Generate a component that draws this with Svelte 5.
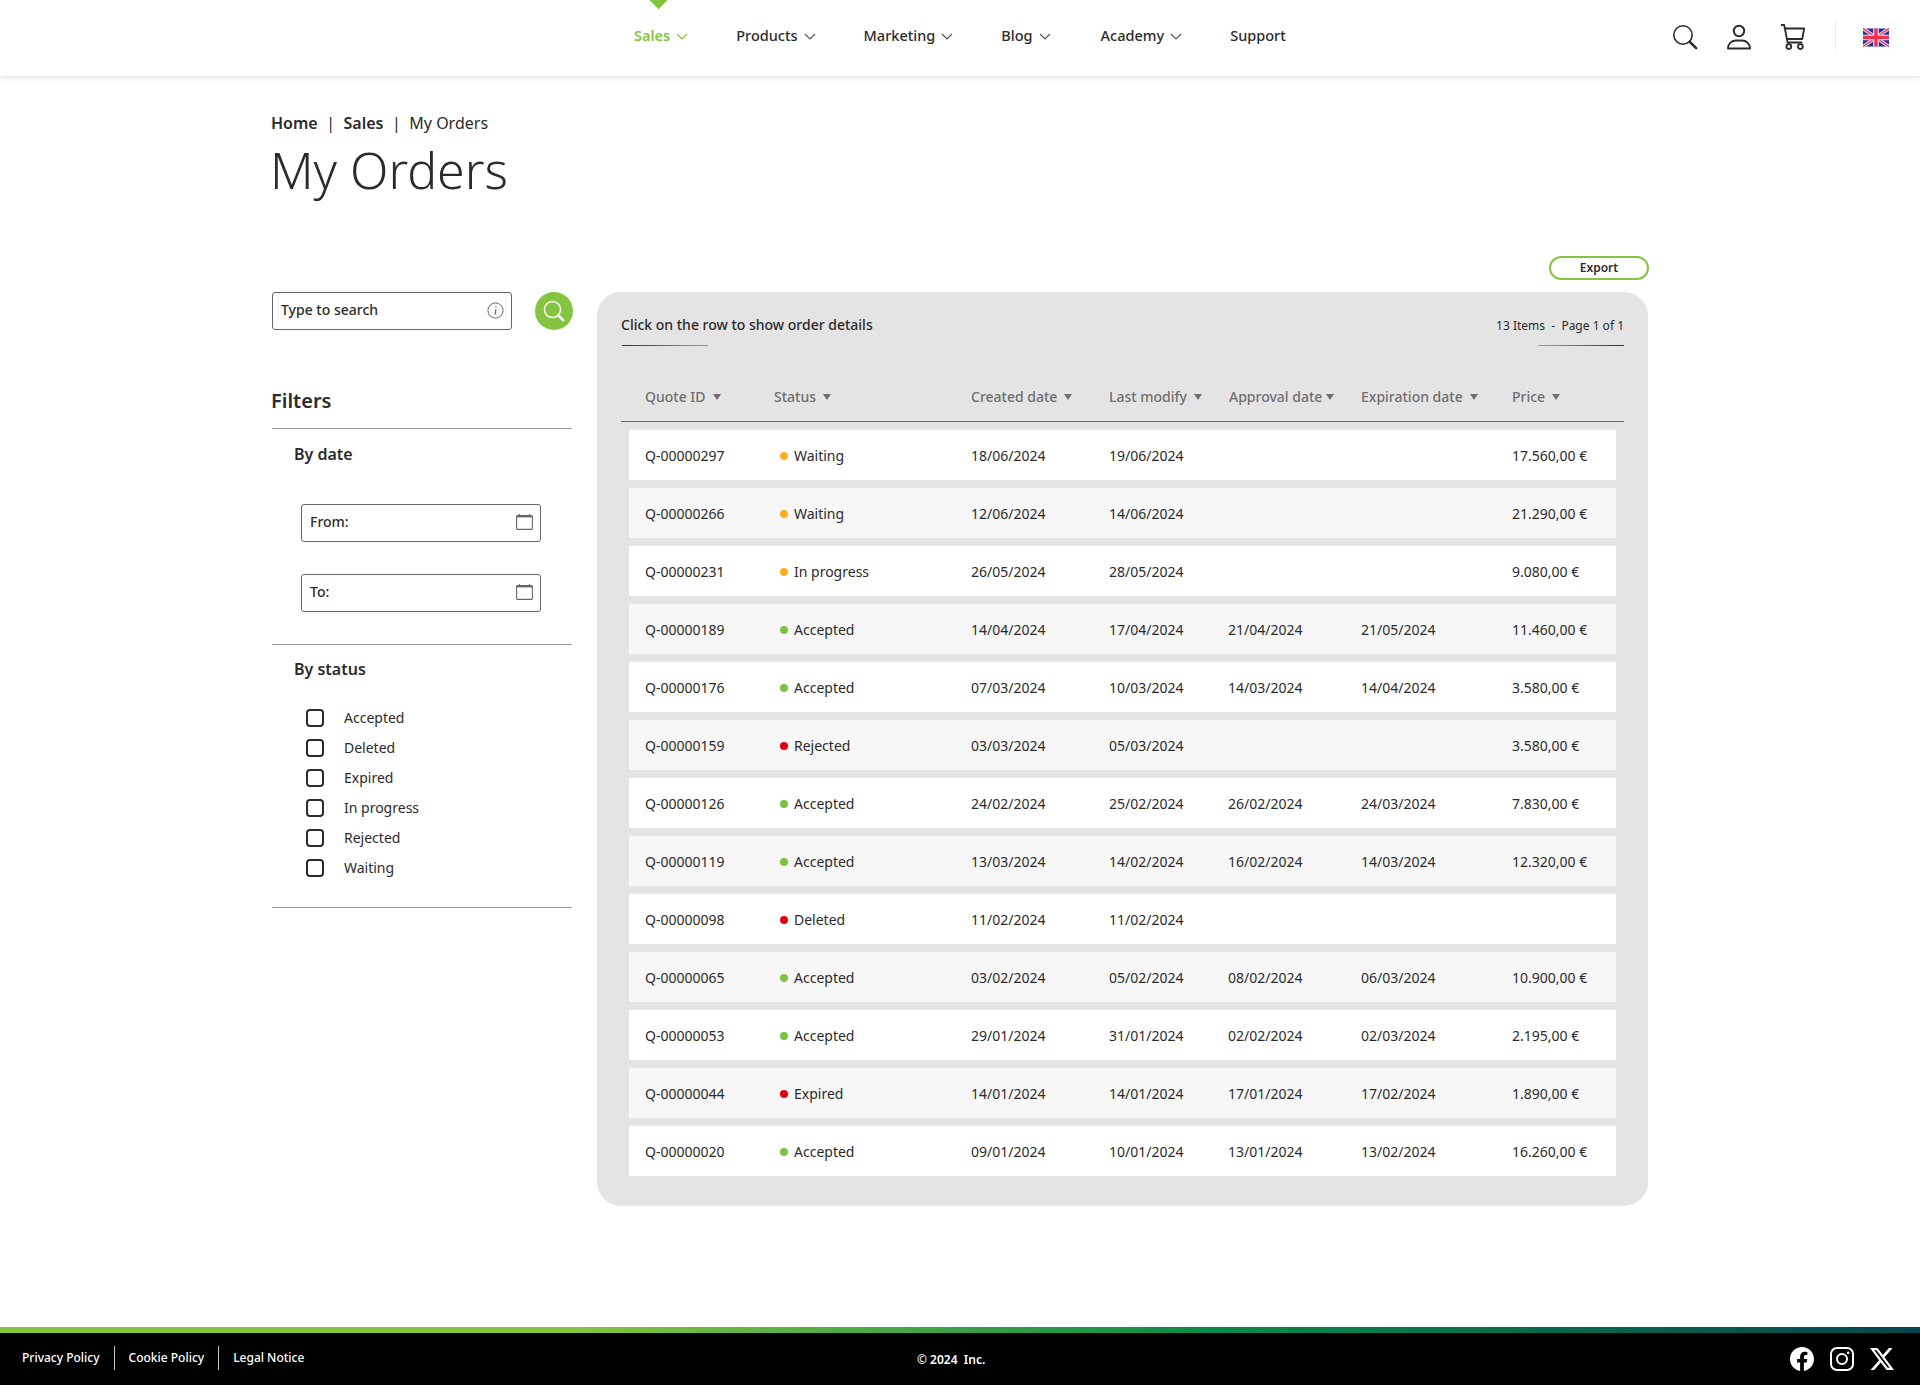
<script>
	const nav = [
		{ label: "Sales", active: true, caret: true },
		{ label: "Products", caret: true },
		{ label: "Marketing", caret: true },
		{ label: "Blog", caret: true },
		{ label: "Academy", caret: true },
		{ label: "Support" }
	]

	const columns = ["Quote ID", "Status", "Created date", "Last modify", "Approval date", "Expiration date", "Price"]

	const orders = [
		["Q-00000297", "Waiting", "18/06/2024", "19/06/2024", "", "", "17.560,00 €"],
		["Q-00000266", "Waiting", "12/06/2024", "14/06/2024", "", "", "21.290,00 €"],
		["Q-00000231", "In progress", "26/05/2024", "28/05/2024", "", "", "9.080,00 €"],
		["Q-00000189", "Accepted", "14/04/2024", "17/04/2024", "21/04/2024", "21/05/2024", "11.460,00 €"],
		["Q-00000176", "Accepted", "07/03/2024", "10/03/2024", "14/03/2024", "14/04/2024", "3.580,00 €"],
		["Q-00000159", "Rejected", "03/03/2024", "05/03/2024", "", "", "3.580,00 €"],
		["Q-00000126", "Accepted", "24/02/2024", "25/02/2024", "26/02/2024", "24/03/2024", "7.830,00 €"],
		["Q-00000119", "Accepted", "13/03/2024", "14/02/2024", "16/02/2024", "14/03/2024", "12.320,00 €"],
		["Q-00000098", "Deleted", "11/02/2024", "11/02/2024", "", "", ""],
		["Q-00000065", "Accepted", "03/02/2024", "05/02/2024", "08/02/2024", "06/03/2024", "10.900,00 €"],
		["Q-00000053", "Accepted", "29/01/2024", "31/01/2024", "02/02/2024", "02/03/2024", "2.195,00 €"],
		["Q-00000044", "Expired", "14/01/2024", "14/01/2024", "17/01/2024", "17/02/2024", "1.890,00 €"],
		["Q-00000020", "Accepted", "09/01/2024", "10/01/2024", "13/01/2024", "13/02/2024", "16.260,00 €"]
	]

	const statuses = ["Accepted", "Deleted", "Expired", "In progress", "Rejected", "Waiting"]

	const dotClass = {
		Waiting: "dot--amber",
		"In progress": "dot--amber",
		Accepted: "dot--green",
		Rejected: "dot--red",
		Deleted: "dot--red",
		Expired: "dot--red"
	}
</script>

{#snippet calendar()}
	<svg class="calendar" width="17" height="16" viewBox="0 0 17 16" fill="none">
		<rect x="0.6" y="1.6" width="15.8" height="13.8" rx="1" stroke="#66696b" stroke-width="1.1" />
		<rect x="0.6" y="1.4" width="15.8" height="2" fill="#66696b" />
		<path d="M3.5 0v2M13.5 0v2" stroke="#66696b" />
	</svg>
{/snippet}

<div class="page">
	<header class="topbar">
		<span class="marker"></span>
		<nav class="menu">
			{#each nav as item}
				<a href="#0" class="menu__item" class:menu__item--active={item.active}>
					{item.label}
					{#if item.caret}
						<svg width="12" height="7" viewBox="0 0 12 7" fill="none"><path d="M1 1l5 5 5-5" stroke="currentColor" stroke-width="1.2" /></svg>
					{/if}
				</a>
			{/each}
		</nav>
		<div class="tools">
			<svg width="26" height="26" viewBox="0 0 26 26" fill="none" stroke="#2b2b2b">
				<circle cx="11" cy="11" r="9.2" stroke-width="1.6" />
				<path d="M17.8 17.8l6.4 6.4" stroke-width="2.6" stroke-linecap="round" />
			</svg>
			<svg width="26" height="26" viewBox="0 0 26 26" fill="none" stroke="#2b2b2b" stroke-width="2">
				<circle cx="13" cy="7" r="5.2" />
				<path d="M2 24.5c0-5 4-8 8-8h6c4 0 8 3 8 8z" stroke-linejoin="round" />
			</svg>
			<svg width="26" height="26" viewBox="0 0 26 26" fill="none" stroke="#2b2b2b" stroke-width="1.8">
				<path d="M1 1h3.2l3.4 17.5h14.6" stroke-linejoin="round" />
				<path d="M4.8 4.5h19.4l-2 10.5H7" stroke-linejoin="round" />
				<circle cx="8.8" cy="22.6" r="2.4" />
				<circle cx="20.4" cy="22.6" r="2.4" />
			</svg>
			<span class="tools__sep"></span>
			<svg class="flag" width="26" height="19" viewBox="0 0 60 42">
				<rect width="60" height="42" rx="3" fill="#1a2aa8" />
				<path d="M0 0l60 42M60 0L0 42" stroke="#ecdfe6" stroke-width="8" />
				<path d="M0 0l60 42M60 0L0 42" stroke="#f0304f" stroke-width="3" />
				<path d="M30 0v42M0 21h60" stroke="#f3e6ec" stroke-width="13" />
				<path d="M30 0v42M0 21h60" stroke="#f0304f" stroke-width="8" />
			</svg>
		</div>
	</header>

	<main class="content">
		<div class="crumbs">
			<a href="#0">Home</a>
			<span class="crumbs__sep">|</span>
			<a href="#0">Sales</a>
			<span class="crumbs__sep">|</span>
			<span class="crumbs__current">My Orders</span>
		</div>
		<h1 class="title">My Orders</h1>

		<div class="actions">
			<button class="export">Export</button>
		</div>

		<div class="columns">
			<aside class="sidebar">
				<div class="search">
					<div class="field field--search">
						<span>Type to search</span>
						<svg width="17" height="17" viewBox="0 0 17 17" fill="none">
							<circle cx="8.5" cy="8.5" r="7.6" stroke="#666" />
							<path d="M9 4.2v1.4M8.8 7.4l-.5 5.2" stroke="#666" stroke-width="1.2" />
						</svg>
					</div>
					<button class="search__go" aria-label="Search">
						<svg width="22" height="22" viewBox="0 0 22 22" fill="none" stroke="#fff">
							<circle cx="9.5" cy="9.5" r="8" stroke-width="1.5" />
							<path d="M15.4 15.4l5 5" stroke-width="2.2" stroke-linecap="round" />
						</svg>
					</button>
				</div>

				<h2 class="filters">Filters</h2>

				<section class="group group--date">
					<h3>By date</h3>
					<div class="field field--date"><span>From:</span>{@render calendar()}</div>
					<div class="field field--date"><span>To:</span>{@render calendar()}</div>
				</section>

				<section class="group group--status">
					<h3>By status</h3>
					<ul class="checks">
						{#each statuses as status}
							<li><span class="box"></span>{status}</li>
						{/each}
					</ul>
				</section>
			</aside>

			<section class="panel">
				<div class="panel__top">
					<p class="hint">Click on the row to show order details</p>
					<p class="count">13 Items &nbsp;-&nbsp; Page 1 of 1</p>
				</div>

				<div class="thead">
					{#each columns as col}
						<span class="thead__cell">{col}<i class="sort"></i></span>
					{/each}
				</div>

				<div class="rows">
					{#each orders as row}
						<div class="row">
							{#each row as value, i}
								{#if i === 1}
									<span class="status"><i class="dot {dotClass[value]}"></i>{value}</span>
								{:else}
									<span>{value}</span>
								{/if}
							{/each}
						</div>
					{/each}
				</div>
			</section>
		</div>
	</main>

	<footer class="footer">
		<div class="footer__links">
			<a href="#0">Privacy Policy</a>
			<a href="#0">Cookie Policy</a>
			<a href="#0">Legal Notice</a>
		</div>
		<div class="footer__copy">© 2024 &nbsp;Inc.</div>
		<div class="footer__social">
			<svg width="24" height="24" viewBox="0 0 24 24" fill="#fff"><path d="M24 12.07C24 5.4 18.63 0 12 0S0 5.4 0 12.07c0 6.03 4.39 11.02 10.13 11.93v-8.44H7.08v-3.49h3.05V9.41c0-3.02 1.79-4.69 4.53-4.69 1.31 0 2.68.24 2.68.24v2.97h-1.51c-1.49 0-1.96.93-1.96 1.89v2.25h3.33l-.53 3.49h-2.8V24C19.61 23.09 24 18.1 24 12.07z" /></svg>
			<svg width="24" height="24" viewBox="0 0 24 24" fill="none" stroke="#fff">
				<rect x="1" y="1" width="22" height="22" rx="6" stroke-width="2" />
				<circle cx="12" cy="12" r="5" stroke-width="2" />
				<circle cx="18.2" cy="5.8" r="1.3" fill="#fff" stroke="none" />
			</svg>
			<svg width="24" height="24" viewBox="0 0 24 24" fill="#fff"><path d="M18.9 1h3.68l-8.04 9.19L24 23h-7.41l-5.8-7.58L4.16 23H.47l8.6-9.83L0 1h7.59l5.24 6.93zM17.61 20.65h2.04L6.49 3.24H4.3z" /></svg>
		</div>
	</footer>
</div>

<style>
	:global(body) {
		margin: 0;
		background: #fff;
		color: #2b2b2b;
		font-family: "Noto Sans", "Open Sans", sans-serif;
	}

	a {
		color: inherit;
		text-decoration: none;
	}

	h1,
	h2,
	h3,
	p,
	ul {
		margin: 0;
		padding: 0;
	}

	.page {
		display: flex;
		flex-direction: column;
		min-height: 1385px;
	}

	/* Top bar */

	.topbar {
		position: relative;
		display: flex;
		align-items: center;
		height: 76px;
		padding-left: 634px;
		padding-right: 31px;
		box-sizing: border-box;
		box-shadow: 0 1px 6px rgba(0, 0, 0, 0.14);
	}

	.marker {
		position: absolute;
		left: 649px;
		top: -10px;
		width: 19px;
		height: 19px;
		background: #84c441;
		transform: rotate(45deg) scale(0.72);
	}

	.menu {
		display: flex;
		gap: 48px;
		margin-top: -6px;
	}

	.menu__item {
		display: flex;
		align-items: center;
		gap: 6px;
		font-size: 14.5px;
		font-weight: 500;
		line-height: 20px;
	}

	.menu__item:nth-child(5) {
		margin-left: 2px;
	}

	.menu__item svg {
		color: #555;
		margin-top: 3px;
	}

	.menu__item--active {
		font-weight: 600;
	}

	.menu__item--active,
	.menu__item--active svg {
		color: #84c441;
	}

	.tools {
		display: flex;
		align-items: center;
		gap: 28px;
		margin-left: auto;
		margin-top: -2px;
	}

	.tools__sep {
		width: 1px;
		height: 34px;
		background: #eee;
		margin-left: 1px;
		margin-right: -1px;
	}

	.tools svg {
		flex: none;
	}

	/* Page */

	.content {
		width: 1376px;
		margin-left: 272px;
		padding-top: 36px;
	}

	.crumbs {
		display: flex;
		gap: 8.5px;
		margin-left: -1px;
		font-size: 16px;
		line-height: 22px;
		font-weight: 600;
	}

	.crumbs__sep,
	.crumbs__current {
		font-weight: 400;
	}

	.title {
		margin-top: 1px;
		margin-left: -2px;
		font-size: 50px;
		line-height: 70px;
		font-weight: 300;
		color: #2b2b2b;
	}

	.actions {
		display: flex;
		justify-content: flex-end;
		margin-top: 51px;
		margin-right: -1px;
	}

	.export {
		width: 100px;
		height: 24px;
		padding: 0 0 2px;
		border: 2px solid #84c441;
		border-radius: 12px;
		background: #fff;
		color: #2b2b2b;
		font: 600 12px "Noto Sans", sans-serif;
	}

	.columns {
		display: flex;
		gap: 25px;
		margin-top: 12px;
		align-items: flex-start;
	}

	/* Sidebar */

	.sidebar {
		width: 300px;
		flex: none;
	}

	.search {
		display: flex;
		align-items: center;
		gap: 23px;
	}

	.field {
		display: flex;
		flex: none;
		align-items: center;
		justify-content: space-between;
		box-sizing: border-box;
		width: 240px;
		height: 38px;
		padding: 0 8px;
		border: 1px solid #666;
		border-radius: 3px;
		font-size: 14px;
		font-weight: 500;
	}

	.field--search {
		padding-right: 7px;
		padding-bottom: 2px;
	}

	.field--search span {
		margin-top: -2px;
	}

	.field--search svg {
		margin-top: 1px;
	}

	.field--date {
		margin-left: 29px;
		padding-bottom: 3px;
		padding-right: 7px;
		font-weight: 500;
	}

	.field--date svg {
		margin-top: 1px;
	}

	.search__go {
		display: grid;
		flex: none;
		place-items: center;
		width: 38px;
		height: 38px;
		padding: 0;
		border: 0;
		border-radius: 50%;
		background: #84c441;
	}

	.filters {
		margin-top: 57px;
		padding-bottom: 14px;
		text-indent: -1px;
		border-bottom: 1px solid #999;
		font-size: 20px;
		line-height: 27px;
		font-weight: 600;
	}

	.group h3 {
		margin-left: 22px;
		font-size: 16px;
		line-height: 22px;
		font-weight: 600;
	}

	.group--date {
		padding-top: 14px;
		padding-bottom: 32px;
		border-bottom: 1px solid #999;
	}

	.group--date .field {
		margin-top: 32px;
	}

	.group--date h3 + .field {
		margin-top: 39px;
	}

	.group--status {
		padding-top: 13px;
		padding-bottom: 30px;
		border-bottom: 1px solid #999;
	}

	.checks {
		list-style: none;
		margin-top: 27px;
		margin-left: 34px;
		display: flex;
		flex-direction: column;
		gap: 10px;
		font-size: 14px;
	}

	.checks li {
		display: flex;
		align-items: center;
		gap: 20px;
		height: 20px;
	}

	.box {
		box-sizing: border-box;
		width: 18px;
		height: 18px;
		margin-top: 2px;
		border: 2px solid #2b2b2b;
		border-radius: 4px;
	}

	/* Orders panel */

	.panel {
		box-sizing: border-box;
		width: 1051px;
		height: 914px;
		padding: 23px 24px 0;
		border-radius: 24px;
		background: #e4e4e4;
	}

	.panel__top {
		display: flex;
		justify-content: space-between;
		align-items: flex-start;
	}

	.hint,
	.count {
		position: relative;
		height: 21px;
		padding-bottom: 10px;
		line-height: 20px;
	}

	.hint {
		font-size: 14px;
		font-weight: 500;
	}

	.count {
		height: 20px;
		padding-top: 1px;
		font-size: 12px;
	}

	.hint::after,
	.count::after {
		content: "";
		position: absolute;
		bottom: 0;
		width: 86px;
		height: 1px;
	}

	.hint::after {
		left: 1px;
		background: linear-gradient(90deg, #06464f, #0a8a48 40%, #84c441);
	}

	.count::after {
		right: 0;
		background: linear-gradient(90deg, #84c441, #0a8a48 60%, #06464f);
	}

	.thead,
	.row {
		display: grid;
		grid-template-columns: 129px 197px 138px 119px 133px 151px 1fr;
		align-items: center;
		font-size: 14px;
	}

	.thead {
		height: 48px;
		margin-top: 26px;
		padding-left: 24px;
		padding-bottom: 1px;
		border-bottom: 1px solid #666;
		color: #6f6f6f;
		font-weight: 500;
		box-sizing: content-box;
	}

	.thead__cell {
		display: flex;
		align-items: center;
		gap: 7px;
		white-space: nowrap;
	}

	.thead__cell:nth-child(5) {
		margin-left: 1px;
		gap: 4px;
	}

	.sort {
		width: 0;
		height: 0;
		margin-top: 2px;
		border-left: 4px solid transparent;
		border-right: 4px solid transparent;
		border-top: 6px solid #6f6f6f;
	}

	.rows {
		display: flex;
		flex-direction: column;
		gap: 8px;
		margin: 8px 8px 0;
	}

	.row {
		height: 50px;
		padding-left: 16px;
		color: #2b2b2b;
	}

	.row:nth-child(odd) {
		background: #fff;
	}

	.row:nth-child(even) {
		background: #f7f7f7;
	}

	.status {
		display: flex;
		align-items: center;
		gap: 6px;
		padding-left: 6px;
	}

	.dot {
		width: 8px;
		height: 8px;
		margin-top: 1px;
		border-radius: 50%;
	}

	.dot--amber {
		background: #fbb020;
	}

	.dot--green {
		background: #7dc241;
	}

	.dot--red {
		background: #e3000f;
	}

	/* Footer */

	.footer {
		position: relative;
		display: flex;
		align-items: center;
		justify-content: space-between;
		box-sizing: border-box;
		height: 58px;
		margin-top: auto;
		padding: 6px 26px 0 22px;
		background: #000;
		color: #fff;
	}

	.footer::before {
		content: "";
		position: absolute;
		inset: 0 0 auto 0;
		height: 6px;
		background: linear-gradient(90deg, #84c441 0%, #84c441 30%, #0a8a48 63%, #06464f 100%);
	}

	.footer__links {
		display: flex;
		margin-top: -2px;
		font-size: 12px;
		font-weight: 500;
	}

	.footer__links a {
		padding: 0 14px;
		line-height: 24px;
		border-left: 1px solid #ccc;
	}

	.footer__links a:first-child {
		padding-left: 0;
		border-left: 0;
	}

	.footer__copy {
		position: absolute;
		left: 917px;
		top: 23px;
		font-size: 12px;
		font-weight: 600;
		line-height: 20px;
	}

	.footer__social {
		display: flex;
		gap: 16px;
	}
</style>
